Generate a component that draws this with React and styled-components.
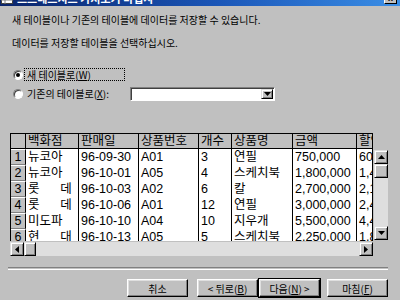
import React from "react";
import styled, { createGlobalStyle } from "styled-components";

const GlobalStyle = createGlobalStyle`
  html, body {
    margin: 0;
    padding: 0;
    background: #c0c0c0;
  }
`;

const Dialog = styled.div`
  width: 400px;
  height: 300px;
  overflow: hidden;
  background: #c0c0c0;
  color: #000;
  font-family: "Noto Sans CJK KR", sans-serif;
  font-size: 10px;
  display: flex;
  flex-direction: column;
`;

// only the bottom strip of the caption is visible in the shot
const TitleBar = styled.div`
  height: 6px;
  flex: none;
  overflow: hidden;
  display: flex;
  align-items: flex-end;
  background: linear-gradient(90deg, #0a246a 0%, #1a56b8 55%, #3a8ee6 100%);
`;

const TitleInner = styled.div`
  flex: 1;
  height: 16px;
  flex-shrink: 0;
  display: flex;
  align-items: center;
  padding: 0 3px 0 1px;
`;

const TitleText = styled.span`
  margin-left: 4px;
  color: #fff;
  font-weight: bold;
  font-size: 11px;
  line-height: 16px;
  white-space: nowrap;
  flex: 1;
`;

const CloseBox = styled.div`
  width: 13px;
  height: 11px;
  box-sizing: border-box;
  background: #c0c0c0;
  border: 1px solid;
  border-color: #fff #000 #000 #fff;
  font-size: 9px;
  line-height: 9px;
  text-align: center;
  font-family: "Liberation Sans", sans-serif;
  font-weight: bold;
`;

const IntroLine = styled.div`
  margin: ${(p) => p.$top}px 0 0 12px;
  line-height: 12px;
  white-space: nowrap;
`;

const RadioRow = styled.div`
  display: flex;
  align-items: center;
  height: 15px;
  margin-top: ${(p) => p.$top}px;
  padding-left: 13px;
`;

const RadioDot = styled.span`
  width: 10px;
  height: 10px;
  box-sizing: border-box;
  border-radius: 50%;
  background: #fff;
  border: 1px solid;
  border-color: #808080 #fff #fff #808080;
  box-shadow: inset 1px 1px #404040;
  display: flex;
  align-items: center;
  justify-content: center;
  &::after {
    content: "";
    width: 4px;
    height: 4px;
    border-radius: 50%;
    background: ${(p) => (p.$checked ? "#000" : "transparent")};
  }
`;

const RadioLabel = styled.span`
  margin-left: 1px;
  width: 101px;
  height: 13px;
  box-sizing: border-box;
  padding: 0 2px;
  border: 1px dotted ${(p) => (p.$focus ? "#000" : "transparent")};
  line-height: 11px;
  white-space: nowrap;
`;

const Key = styled.u`
  text-underline-offset: 1px;
`;

const Combo = styled.div`
  margin-left: 5px;
  width: 145px;
  height: 14px;
  box-sizing: border-box;
  background: #fff;
  border: 1px solid;
  border-color: #808080 #fff #fff #808080;
  box-shadow: inset 1px 1px #404040;
  display: flex;
  justify-content: flex-end;
  align-items: center;
  padding-right: 1px;
`;

const ArrowButton = styled.div`
  width: ${(p) => p.$w || 14}px;
  height: ${(p) => p.$h || 14}px;
  flex: none;
  box-sizing: border-box;
  background: #c0c0c0;
  border: 1px solid;
  border-color: #dfdfdf #000 #000 #dfdfdf;
  box-shadow: inset 1px 1px #fff, inset -1px -1px #808080;
  display: flex;
  align-items: center;
  justify-content: center;
`;

const GridFrame = styled.div`
  margin: 32px 0 0 10px;
  display: grid;
  grid-template-columns: 363px 15px;
  grid-template-rows: 108px 15px;
`;

const Viewport = styled.div`
  overflow: hidden;
  box-sizing: border-box;
  border: 1px solid #000;
  border-bottom: none;
  background: #fff;
`;

const Table = styled.div`
  display: grid;
  grid-template-columns: 15px 53px 60px 60px 33px 61px 64px 70px;
  grid-template-rows: 15px;
  grid-auto-rows: 16px;
  font-family: "Liberation Sans", "Noto Sans CJK KR", sans-serif;
  font-size: 12.5px;
`;

const HeadCell = styled.div`
  box-sizing: border-box;
  background: #c0c0c0;
  border-right: 1px solid #000;
  border-bottom: 1px solid #000;
  padding-left: 2px;
  line-height: 14px;
  white-space: nowrap;
  overflow: hidden;
`;

const RowHead = styled.div`
  box-sizing: border-box;
  background: #c0c0c0;
  border-top: 1px solid #fff;
  border-right: 1px solid #000;
  border-bottom: 1px solid #808080;
  text-align: center;
  line-height: 14px;
`;

const Cell = styled.div`
  box-sizing: border-box;
  background: #fff;
  border-right: 1px solid #000;
  padding-left: 2px;
  line-height: 16px;
  white-space: pre;
  overflow: hidden;
`;

const VScrollSlot = styled.div`
  padding: 17px 0 0 1px;
`;

const VScroll = styled.div`
  width: 14px;
  height: 90px;
  background: #dedede;
  display: flex;
  flex-direction: column;
  justify-content: space-between;
`;

const HScroll = styled.div`
  margin-top: 1px;
  height: 14px;
  background: #dedede;
  display: flex;
  justify-content: space-between;
`;

const HStart = styled.div`
  display: flex;
`;

const Separator = styled.div`
  margin: 11px 12px 0 8px;
  height: 1px;
  border-top: 1px solid #808080;
  border-bottom: 1px solid #fff;
`;

const ButtonRow = styled.div`
  margin-top: 9px;
  padding-right: 12px;
  display: flex;
  justify-content: flex-end;
`;

const Button = styled.div`
  width: 61px;
  height: 18px;
  box-sizing: border-box;
  margin-left: ${(p) => p.$gap || 0}px;
  background: #c0c0c0;
  border: 1px solid;
  border-color: #fff #000 #000 #fff;
  box-shadow: ${(p) =>
    p.$default
      ? "0 0 0 1px #000, inset -1px -1px #808080, inset 1px 1px #dfdfdf"
      : "inset -1px -1px #808080, inset 1px 1px #dfdfdf"};
  display: flex;
  align-items: center;
  justify-content: center;
  font-size: 10px;
  white-space: nowrap;
`;

const Tri = ({ dir }) => {
  const pts = {
    up: "0,4 7,4 3.5,0",
    down: "0,0 7,0 3.5,4",
    left: "4,0 4,7 0,3.5",
    right: "0,0 0,7 4,3.5",
  }[dir];
  const vertical = dir === "up" || dir === "down";
  return (
    <svg width={vertical ? 7 : 4} height={vertical ? 4 : 7}>
      <polygon points={pts} fill="#000" />
    </svg>
  );
};

const SheetIcon = () => (
  <svg width="12" height="12" viewBox="0 0 12 12">
    <rect x="0.5" y="0.5" width="11" height="11" fill="#fff" stroke="#404040" />
    <line x1="0" y1="4" x2="12" y2="4" stroke="#808080" />
    <line x1="0" y1="8" x2="12" y2="8" stroke="#808080" />
    <line x1="4" y1="0" x2="4" y2="12" stroke="#808080" />
    <rect x="0.5" y="0.5" width="11" height="3" fill="#0a246a" />
  </svg>
);

const columns = ["백화점", "판매일", "상품번호", "개수", "상품명", "금액", "할인액"];

const rows = [
  ["뉴코아", "96-09-30", "A01", "3", "연필", "750,000", "600,000"],
  ["뉴코아", "96-10-01", "A05", "4", "스케치북", "1,800,000", "1,440,000"],
  ["롯      데", "96-10-03", "A02", "6", "칼", "2,700,000", "2,160,000"],
  ["롯      데", "96-10-06", "A01", "12", "연필", "3,000,000", "2,400,000"],
  ["미도파", "96-10-10", "A04", "10", "지우개", "5,500,000", "4,400,000"],
  ["현      대", "96-10-13", "A05", "5", "스케치북", "2,250,000", "1,800,000"],
];

export default function App() {
  return (
    <>
      <GlobalStyle />
      <Dialog>
        <TitleBar>
          <TitleInner>
            <SheetIcon />
            <TitleText>스프레드시트 가져오기 마법사</TitleText>
            <CloseBox>x</CloseBox>
          </TitleInner>
        </TitleBar>

        <IntroLine $top={8}>새 테이블이나 기존의 테이블에 데이터를 저장할 수 있습니다.</IntroLine>
        <IntroLine $top={11}>데이터를 저장할 테이블을 선택하십시오.</IntroLine>

        <RadioRow $top={18}>
          <RadioDot $checked />
          <RadioLabel $focus>
            새 테이블로(<Key>W</Key>)
          </RadioLabel>
        </RadioRow>
        <RadioRow $top={4}>
          <RadioDot />
          <RadioLabel>
            기존의 테이블로(<Key>X</Key>):
          </RadioLabel>
          <Combo>
            <ArrowButton $w={12} $h={10}>
              <Tri dir="down" />
            </ArrowButton>
          </Combo>
        </RadioRow>

        <GridFrame>
          <Viewport>
            <Table>
              <HeadCell />
              {columns.map((c) => (
                <HeadCell key={c}>{c}</HeadCell>
              ))}
              {rows.map((r, i) => (
                <React.Fragment key={i}>
                  <RowHead>{i + 1}</RowHead>
                  {r.map((v, j) => (
                    <Cell key={j}>{v}</Cell>
                  ))}
                </React.Fragment>
              ))}
            </Table>
          </Viewport>
          <VScrollSlot>
            <VScroll>
              <div>
                <ArrowButton>
                  <Tri dir="up" />
                </ArrowButton>
                <ArrowButton />
              </div>
              <ArrowButton>
                <Tri dir="down" />
              </ArrowButton>
            </VScroll>
          </VScrollSlot>
          <HScroll>
            <HStart>
              <ArrowButton>
                <Tri dir="left" />
              </ArrowButton>
              <ArrowButton $w={12} />
            </HStart>
            <ArrowButton>
              <Tri dir="right" />
            </ArrowButton>
          </HScroll>
          <div />
        </GridFrame>

        <Separator />

        <ButtonRow>
          <Button>취소</Button>
          <Button $gap={9}>
            &lt; 뒤로(<Key>B</Key>)
          </Button>
          <Button $gap={1} $default>
            다음(<Key>N</Key>) &gt;
          </Button>
          <Button $gap={7}>
            마침(<Key>F</Key>)
          </Button>
        </ButtonRow>
      </Dialog>
    </>
  );
}
